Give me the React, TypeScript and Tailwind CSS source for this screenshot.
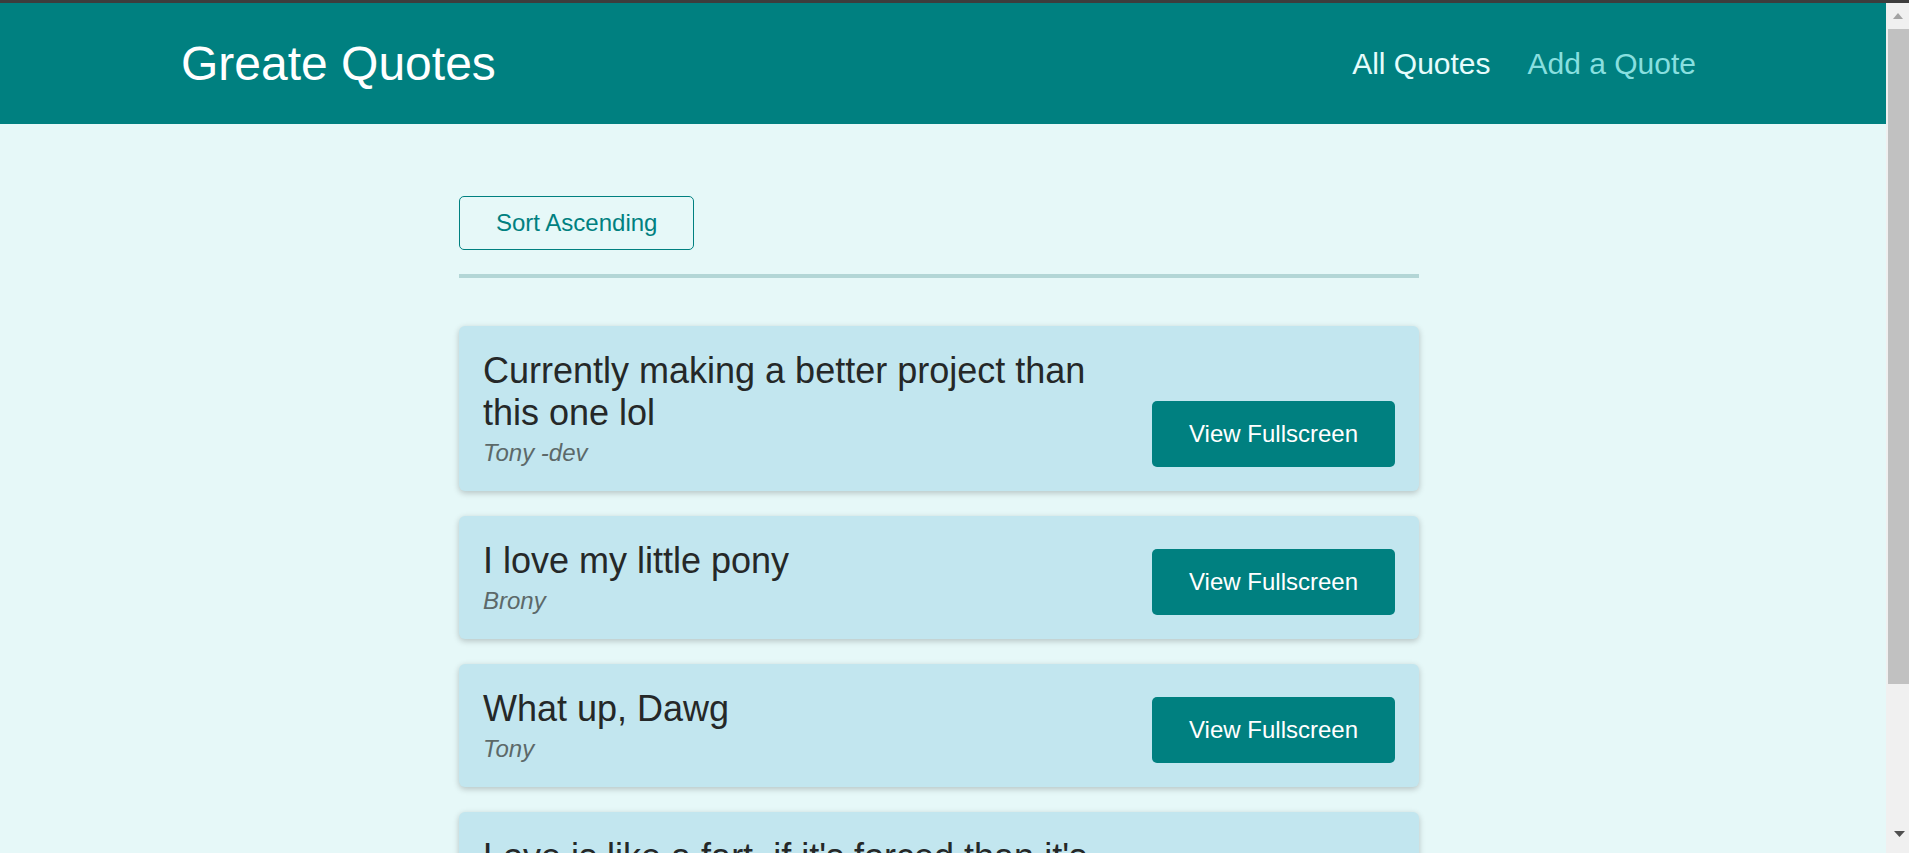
const quotes = [
  { id: "q1", text: "Currently making a better project than this one lol", author: "Tony -dev" },
  { id: "q2", text: "I love my little pony", author: "Brony" },
  { id: "q3", text: "What up, Dawg", author: "Tony" },
  { id: "q4", text: "Love is like a fart, if it's forced than it's probably crap", author: "Unknown" },
];

function QuoteItem({ text, author }: { text: string; author: string }) {
  return (
    <li className="flex items-end gap-[40px] rounded-[6px] bg-[#c2e6ef] p-[24px] shadow-[0_2px_6px_rgba(0,0,0,0.22)]">
      <figure className="m-0 flex-1 min-w-0">
        <blockquote className="m-0 text-[36px] leading-[42px] text-[#252828]">
          <p>{text}</p>
        </blockquote>
        <figcaption className="mt-[5px] text-[24px] italic leading-[28px] text-[#5c6969]">
          {author}
        </figcaption>
      </figure>
      <button className="shrink-0 rounded-[5px] bg-[#008080] px-[37px] py-[19px] text-[24px] leading-[28px] text-white">
        View Fullscreen
      </button>
    </li>
  );
}

function FakeScrollbar() {
  return (
    <div className="relative flex w-[23px] shrink-0 flex-col bg-[#f0f0f0]">
      <div className="flex h-[26px] items-center justify-center">
        <svg width="10" height="6" viewBox="0 0 10 6" className="ml-[1px]">
          <polygon points="5,0 10,6 0,6" fill="#a3a3a3" />
        </svg>
      </div>
      <div className="ml-[2px] h-[655px] bg-[#c1c1c1]" />
      <div className="flex-1" />
      <div className="flex h-[22px] items-start justify-center pt-[0px]">
        <svg width="11" height="6" viewBox="0 0 11 6" className="ml-[3px]">
          <polygon points="0,0 11,0 5.5,6" fill="#505050" />
        </svg>
      </div>
    </div>
  );
}

export default function App() {
  return (
    <div className="flex h-screen w-full flex-col overflow-hidden font-['Liberation_Sans',Arial,sans-serif]">
      <div className="h-[3px] shrink-0 bg-[#3d3d3d]" />
      <div className="flex min-h-0 flex-1">
        <div className="flex min-w-0 flex-1 flex-col overflow-hidden bg-[#e6f8f8]">
          {/* Header */}
          <header className="flex h-[121px] shrink-0 items-center justify-between bg-[#008080] pl-[181px] pr-[190px]">
            <div className="text-[48px] leading-none text-white">Greate Quotes</div>
            <nav>
              <ul className="flex items-center gap-[37px] text-[30px] leading-none">
                <li className="text-[#e6fcfc]">All Quotes</li>
                <li className="text-[#88dfdf]">Add a Quote</li>
              </ul>
            </nav>
          </header>

          {/* Main */}
          <main className="ml-[459px] w-[960px] pt-[72px]">
            <div className="border-b-[4px] border-[#b3d6d6] pb-[24px]">
              <button className="rounded-[5px] border border-[#008080] bg-transparent px-[36px] py-[12px] text-[24px] leading-[28px] text-[#008080]">
                Sort Ascending
              </button>
            </div>
            <ul className="mt-[48px] flex flex-col gap-[25px]">
              {quotes.map((q) => (
                <QuoteItem key={q.id} text={q.text} author={q.author} />
              ))}
            </ul>
          </main>
        </div>
        <FakeScrollbar />
      </div>
    </div>
  );
}
